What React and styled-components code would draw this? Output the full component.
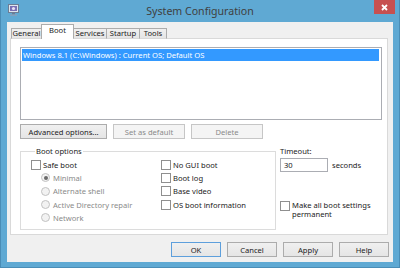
import React from "react";
import styled, { createGlobalStyle } from "styled-components";

const GlobalStyle = createGlobalStyle`
  html, body {
    margin: 0;
    padding: 0;
  }
  body {
    width: 400px;
    height: 268px;
    overflow: hidden;
    font-family: "Noto Sans", "Open Sans", sans-serif;
    font-size: 7.6px;
    color: #222222;
  }
`;

const Window = styled.div`
  width: 400px;
  height: 268px;
  box-sizing: border-box;
  background: #5fa9d3;
  border: 1px solid #4a8db6;
  border-top: none;
  display: flex;
  flex-direction: column;
`;

const TitleBar = styled.div`
  height: 22px;
  display: grid;
  grid-template-columns: 1fr auto 1fr;
  align-items: start;
`;

const AppIcon = styled.svg`
  margin: 4px 0 0 7px;
  justify-self: start;
`;

const Title = styled.div`
  font-size: 10.6px;
  line-height: 22px;
  color: #404040;
`;

const CloseButton = styled.div`
  justify-self: end;
  margin-right: 4px;
  width: 21px;
  height: 14px;
  background: #c75050;
  display: flex;
  align-items: center;
  justify-content: center;
`;

const Client = styled.div`
  flex: 1;
  margin: 0 6px 5px 6px;
  background: #f0f0f0;
  display: flex;
  flex-direction: column;
  padding: 3px 5px 5px 3px;
`;

const TabStrip = styled.div`
  display: flex;
  align-items: flex-end;
  height: 14px;
  padding-left: 2px;
  position: relative;
  z-index: 1;
`;

const Tab = styled.div`
  box-sizing: border-box;
  width: ${(p) => p.$w}px;
  height: ${(p) => (p.$active ? 15 : 11)}px;
  border: 1px solid #acacac;
  border-bottom: ${(p) => (p.$active ? "none" : "1px solid #d9d9d9")};
  margin-left: -1px;
  background: ${(p) =>
    p.$active ? "#ffffff" : "linear-gradient(#f0f0f0, #e5e5e5)"};
  display: flex;
  align-items: center;
  justify-content: center;
  line-height: 1;
  padding-bottom: ${(p) => (p.$active ? 2 : 0)}px;
`;

const Panel = styled.div`
  box-sizing: border-box;
  height: 197px;
  margin-top: -1px;
  border: 1px solid #d9d9d9;
  background: #ffffff;
  padding: 8px 5px 0 9px;
  display: flex;
  flex-direction: column;
`;

const ListBox = styled.div`
  box-sizing: border-box;
  width: 362px;
  height: 73px;
  border: 1px solid #abadb3;
  padding: 1px;
`;

const ListItem = styled.div`
  height: 12px;
  line-height: 12px;
  padding-left: 1px;
  background: ${(p) => (p.$selected ? "#3399ff" : "transparent")};
  color: ${(p) => (p.$selected ? "#ffffff" : "#222222")};
  margin-right: 1px;
`;

const ButtonRow = styled.div`
  display: flex;
  gap: 6px;
  margin-top: 4px;
`;

const Button = styled.div`
  box-sizing: border-box;
  width: ${(p) => p.$w}px;
  height: 15px;
  display: flex;
  align-items: center;
  justify-content: center;
  border: 1px solid
    ${(p) => (p.$default ? "#5d9fdc" : p.$disabled ? "#c6c6c6" : "#acacac")};
  background: ${(p) =>
    p.$disabled ? "#f4f4f4" : "linear-gradient(#f0f0f0, #e5e5e5)"};
  color: ${(p) => (p.$disabled ? "#8a8a8a" : "#222222")};
`;

const Lower = styled.div`
  display: flex;
  margin-top: 7px;
`;

const GroupBox = styled.fieldset`
  box-sizing: border-box;
  width: 256px;
  height: 84px;
  margin: 0;
  padding: 2px 0 0 10px;
  border: 1px solid #dcdcdc;
  display: grid;
  grid-template-columns: 130px 1fr;
  grid-auto-flow: column;
  grid-template-rows: repeat(5, 13.3px);
`;

const Legend = styled.legend`
  padding: 0 1px;
  margin-left: 4px;
  line-height: 10px;
`;

const Option = styled.div`
  display: flex;
  align-items: center;
  padding-left: ${(p) => (p.$indent ? 10 : 0)}px;
  color: ${(p) => (p.$disabled ? "#8a8a8a" : "#222222")};
  white-space: nowrap;
`;

const CheckBox = styled.span`
  box-sizing: border-box;
  width: 10px;
  height: 10px;
  border: 1px solid #8f8f8f;
  background: #ffffff;
  margin-right: 2px;
  flex: none;
`;

const Radio = styled.span`
  box-sizing: border-box;
  width: 9px;
  height: 9px;
  border-radius: 50%;
  border: 1px solid #c2c2c2;
  background: #f2f2f2;
  margin-right: 3px;
  flex: none;
  display: flex;
  align-items: center;
  justify-content: center;
  &::after {
    content: "";
    width: 4px;
    height: 4px;
    border-radius: 50%;
    background: ${(p) => (p.$checked ? "#6a6a6a" : "transparent")};
  }
`;

const SideColumn = styled.div`
  margin-left: 4px;
  display: flex;
  flex-direction: column;
`;

const FieldLabel = styled.div`
  line-height: 10px;
`;

const TimeoutRow = styled.div`
  display: flex;
  align-items: center;
  margin-top: 2px;
`;

const TextInput = styled.div`
  box-sizing: border-box;
  width: 48px;
  height: 14px;
  border: 1px solid #abadb3;
  background: #fff;
  padding-left: 3px;
  line-height: 12px;
  margin-right: 4px;
`;

const PermanentRow = styled.div`
  display: flex;
  align-items: flex-start;
  margin-top: 29px;
`;

const TwoLine = styled.div`
  line-height: 9.5px;
  margin-top: -0.5px;
`;

const Footer = styled.div`
  display: flex;
  justify-content: flex-end;
  gap: 6px;
  margin-top: 7px;
  margin-right: -1px;
`;

function TitleIcon() {
  return (
    <AppIcon width="11" height="12" viewBox="0 0 11 12">
      <rect x="0.5" y="0.5" width="10" height="8" fill="#dfe6ee" stroke="#6d7d95" />
      <rect x="2" y="2" width="7" height="5" fill="#7a6fb4" />
      <circle cx="5.5" cy="4.5" r="1.6" fill="#e7e2f5" />
      <rect x="4" y="9" width="3" height="1.5" fill="#6d7d95" />
      <rect x="2" y="10.5" width="7" height="1.2" fill="#8fa0b8" />
    </AppIcon>
  );
}

export default function App() {
  return (
    <>
      <GlobalStyle />
      <Window>
        <TitleBar>
          <TitleIcon />
          <Title>System Configuration</Title>
          <CloseButton>
            <svg width="7" height="7" viewBox="0 0 7 7">
              <path d="M1 1 L6 6 M6 1 L1 6" stroke="#ffffff" strokeWidth="1.8" />
            </svg>
          </CloseButton>
        </TitleBar>
        <Client>
          <TabStrip>
            <Tab $w={31}>General</Tab>
            <Tab $w={33} $active>Boot</Tab>
            <Tab $w={34}>Services</Tab>
            <Tab $w={34}>Startup</Tab>
            <Tab $w={28}>Tools</Tab>
          </TabStrip>
          <Panel>
            <ListBox>
              <ListItem $selected>
                Windows 8.1 (C:\Windows) : Current OS; Default OS
              </ListItem>
            </ListBox>
            <ButtonRow>
              <Button $w={87}>Advanced options...</Button>
              <Button $w={72} $disabled>Set as default</Button>
              <Button $w={72} $disabled>Delete</Button>
            </ButtonRow>
            <Lower>
              <GroupBox>
                <Legend>Boot options</Legend>
                <Option><CheckBox />Safe boot</Option>
                <Option $indent $disabled><Radio $checked />Minimal</Option>
                <Option $indent $disabled><Radio />Alternate shell</Option>
                <Option $indent $disabled><Radio />Active Directory repair</Option>
                <Option $indent $disabled><Radio />Network</Option>
                <Option><CheckBox />No GUI boot</Option>
                <Option><CheckBox />Boot log</Option>
                <Option><CheckBox />Base video</Option>
                <Option><CheckBox />OS boot information</Option>
              </GroupBox>
              <SideColumn>
                <FieldLabel>Timeout:</FieldLabel>
                <TimeoutRow>
                  <TextInput>30</TextInput>
                  seconds
                </TimeoutRow>
                <PermanentRow>
                  <CheckBox />
                  <TwoLine>
                    Make all boot settings
                    <br />
                    permanent
                  </TwoLine>
                </PermanentRow>
              </SideColumn>
            </Lower>
          </Panel>
          <Footer>
            <Button $w={50} $default>OK</Button>
            <Button $w={50}>Cancel</Button>
            <Button $w={50}>Apply</Button>
            <Button $w={50}>Help</Button>
          </Footer>
        </Client>
      </Window>
    </>
  );
}
